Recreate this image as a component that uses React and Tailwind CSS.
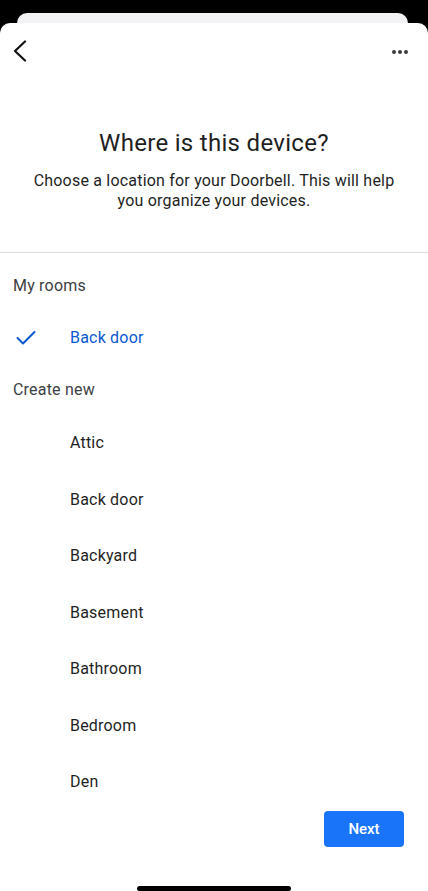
import React from "react";

const rooms = ["Attic", "Back door", "Backyard", "Basement", "Bathroom", "Bedroom", "Den"];

const App = () => (
  <div
    className="w-[428px] h-[891px] bg-black flex flex-col overflow-hidden"
    style={{ fontFamily: "Roboto, 'Noto Sans', sans-serif" }}
  >
    <div className="ml-[17px] mr-[20px] mt-[13px] h-[10px] rounded-t-[10px] bg-[#f2f2f5]" />
    <div className="flex-1 bg-white rounded-t-[10px] flex flex-col">
      {/* header */}
      <div className="h-[56px] flex items-center justify-between pl-[11px] pr-[20px]">
        <svg width="18" height="22" viewBox="0 0 18 22" fill="none">
          <path d="M14 1.5 L4 11 L14 20.5" stroke="#111" strokeWidth="2.2" strokeLinecap="round" strokeLinejoin="round" />
        </svg>
        <div className="flex gap-[2px] mt-[2px]">
          <span className="w-[4px] h-[4px] rounded-full bg-[#3c3c3c]" />
          <span className="w-[4px] h-[4px] rounded-full bg-[#3c3c3c]" />
          <span className="w-[4px] h-[4px] rounded-full bg-[#3c3c3c]" />
        </div>
      </div>

      <h1 className="mt-[48px] text-center text-[24px] leading-[32px] tracking-[0.3px] text-[#1f1f1f]">Where is this device?</h1>
      <p className="mt-[12px] px-[24px] text-center text-[16px] leading-[20px] tracking-[0.2px] text-[#1f1f1f]">
        Choose a location for your Doorbell. This will help you organize your devices.
      </p>
      <div className="mt-[41px] h-px bg-[#dadce0]" />

      <div className="mt-[7px] h-[52px] flex items-center px-[13px] text-[16px] tracking-[0.2px] text-[#3c4043]">My rooms</div>
      <div className="h-[52px] flex items-center">
        <div className="w-[70px] pl-[16px]">
          <svg width="20" height="16" viewBox="0 0 20 16" fill="none">
            <path d="M1.5 8 L7 13.5 L18.5 2" stroke="#0b57d0" strokeWidth="2" strokeLinecap="round" strokeLinejoin="round" />
          </svg>
        </div>
        <span className="text-[16px] tracking-[0.2px] text-[#0b57d0]">Back door</span>
      </div>
      <div className="h-[51px] flex items-center px-[13px] text-[16px] tracking-[0.2px] text-[#3c4043]">Create new</div>

      {rooms.map((r) => (
        <div key={r} className="h-[56.5px] flex items-center pl-[70px] text-[16px] tracking-[0.2px] text-[#1f1f1f]">
          {r}
        </div>
      ))}

      <div className="mt-[0.5px] flex justify-end pr-[24px]">
        <button className="w-[80px] h-[36px] rounded-[4px] bg-[#1a74f9] text-white text-[15px] font-medium">Next</button>
      </div>

      <div className="mt-[39px] mx-auto w-[154px] h-[5px] rounded-full bg-black" />
    </div>
  </div>
);

export default App;
